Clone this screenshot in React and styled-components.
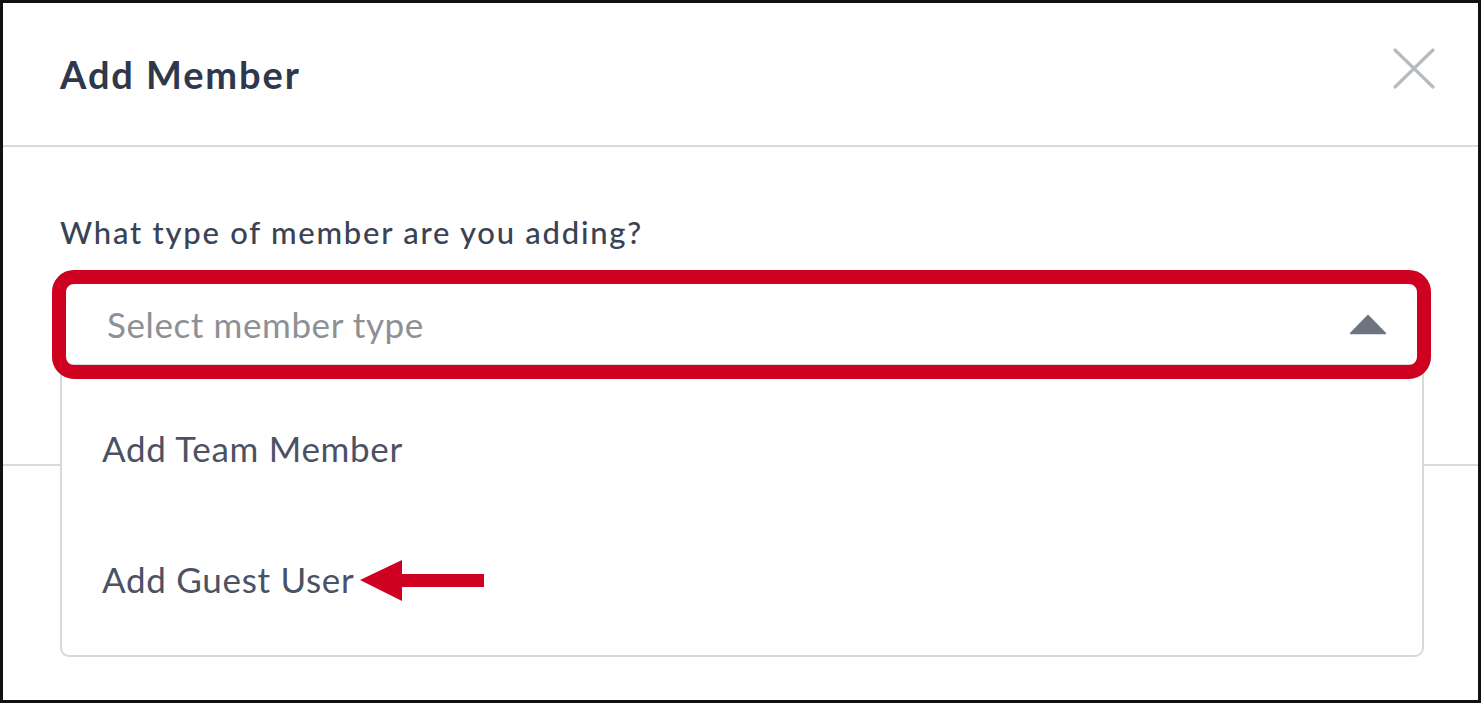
import React from "react";
import styled, { createGlobalStyle } from "styled-components";

const GlobalStyle = createGlobalStyle`
  html, body {
    margin: 0;
    padding: 0;
    background: #ffffff;
  }
  body {
    font-family: Lato, "Open Sans", sans-serif;
  }
`;

const Frame = styled.div`
  width: 1481px;
  height: 703px;
  box-sizing: border-box;
  border: 3px solid #111111;
  background: #ffffff;
  display: flex;
  flex-direction: column;
`;

const Header = styled.div`
  height: 142px;
  flex-shrink: 0;
  display: flex;
  align-items: center;
  justify-content: space-between;
  padding: 0 43px 0 57px;
  border-bottom: 2px solid #d7dbe0;
`;

const Title = styled.h2`
  margin: 0;
  font-size: 38px;
  font-weight: 700;
  letter-spacing: 1.9px;
  color: #2e384a;
`;

const CloseButton = styled.button`
  border: none;
  background: none;
  padding: 0;
  margin-bottom: 12px;
  width: 42px;
  height: 41px;
  cursor: pointer;
  display: flex;
`;

const Body = styled.div`
  height: 319px;
  box-sizing: border-box;
  flex-shrink: 0;
  padding: 67px 54px 0 57px;
  border-bottom: 2px solid #d7dbe0;
`;

const Label = styled.div`
  font-size: 31px;
  font-weight: 500;
  line-height: 37px;
  letter-spacing: 1.75px;
  color: #3a4354;
  margin-bottom: 31px;
`;

const SelectWrap = styled.div`
  position: relative;
  z-index: 2;
`;

const SelectBox = styled.div`
  height: 84px;
  box-sizing: border-box;
  border: 2px solid #d6dadf;
  border-radius: 8px;
  background: #ffffff;
  display: flex;
  align-items: center;
  justify-content: space-between;
  padding: 0 35px 0 45px;
`;

const Placeholder = styled.span`
  font-size: 35px;
  line-height: 42px;
  letter-spacing: 0.6px;
  color: #8d9095;
`;

const Highlight = styled.div`
  position: absolute;
  top: -12px;
  left: -8px;
  right: -7px;
  bottom: -13px;
  border: 14px solid #cf0120;
  border-radius: 22px;
  pointer-events: none;
  z-index: 3;
`;

const Menu = styled.ul`
  position: absolute;
  top: 100%;
  left: 0;
  right: 0;
  margin: 0;
  list-style: none;
  background: #ffffff;
  border: 2px solid #d6dadf;
  border-top: none;
  border-radius: 0 0 9px 9px;
  padding: 16px 0 11px;
`;

const MenuItem = styled.li`
  height: 131px;
  display: flex;
  align-items: center;
  padding-left: 40px;
  font-size: 35px;
  line-height: 42px;
  letter-spacing: 0.7px;
  color: #4a5264;
  cursor: pointer;
`;

const Pointer = styled.svg`
  margin-left: 6px;
  margin-top: 4px;
  flex-shrink: 0;
`;

const Footer = styled.div`
  flex: 1;
`;

export default function App() {
  const options = ["Add Team Member", "Add Guest User"];

  return (
    <>
      <GlobalStyle />
      <Frame>
        <Header>
          <Title>Add Member</Title>
          <CloseButton aria-label="Close">
            <svg width="42" height="41" viewBox="0 0 42 41">
              <path
                d="M2 2 L40 39 M40 2 L2 39"
                stroke="#b7bac0"
                strokeWidth="3.2"
                strokeLinecap="round"
              />
            </svg>
          </CloseButton>
        </Header>
        <Body>
          <Label>What type of member are you adding?</Label>
          <SelectWrap>
            <SelectBox>
              <Placeholder>Select member type</Placeholder>
              <svg width="38" height="21" viewBox="0 0 38 21">
                <path
                  d="M19 1.5 L36.5 19.5 L1.5 19.5 Z"
                  fill="#6e7380"
                  stroke="#6e7380"
                  strokeWidth="1.5"
                  strokeLinejoin="round"
                />
              </svg>
            </SelectBox>
            <Highlight />
            <Menu>
              {options.map((option, i) => (
                <MenuItem key={option}>
                  {option}
                  {i === 1 && (
                    <Pointer width="124" height="41" viewBox="0 0 124 41">
                      <polygon
                        points="0,20 42,0 42,14 124,14 124,27 42,27 42,41"
                        fill="#cf0120"
                      />
                    </Pointer>
                  )}
                </MenuItem>
              ))}
            </Menu>
          </SelectWrap>
        </Body>
        <Footer />
      </Frame>
    </>
  );
}
